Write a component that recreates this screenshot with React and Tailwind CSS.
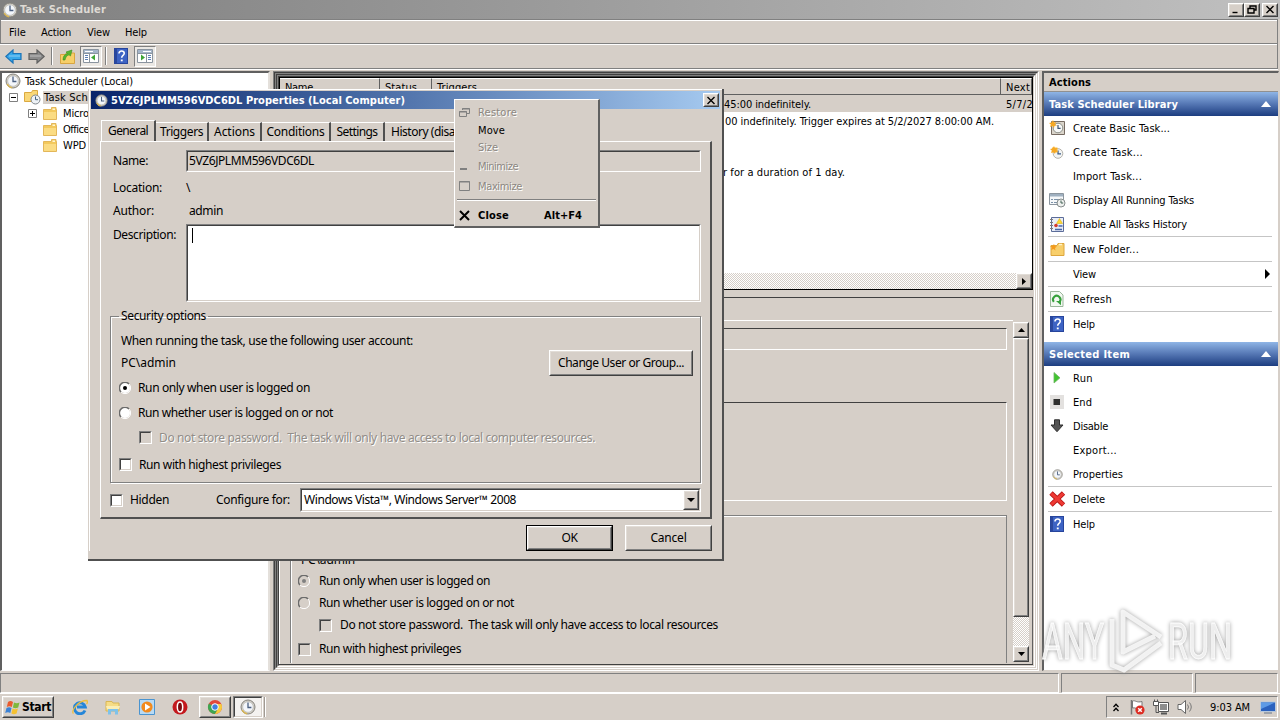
import React, { useLayoutEffect, useRef } from 'react';

// Text run that is tracked so it takes exactly `w` pixels
const Txt = ({ w, className = '', children }) => {
    const ref = useRef(null);

    useLayoutEffect(() => {
        const el = ref.current;
        el.style.letterSpacing = '0px';
        if (!w) return;
        const natural = el.getBoundingClientRect().width;
        el.style.letterSpacing = (w - natural) / el.textContent.length + 'px';
    }, [w, children]);

    return (
        <span ref={ref} className={`inline-block shrink-0 whitespace-pre ${className}`}>
            {children}
        </span>
    );
};

const ClockIcon = ({ size = 16, className = '' }) => (
    <svg width={size} height={size} viewBox="0 0 16 16" className={`shrink-0 ${className}`}>
        <circle cx="8" cy="8" r="7" fill="#d3d0c9" stroke="#85837d" />
        <circle cx="8" cy="8" r="5.3" fill="#f3f6fb" stroke="#b9b7b0" strokeWidth="0.7" />
        <path d="M8 3.500V8.500h3.400" fill="none" stroke="#4a5f80" strokeWidth="1.300" />
        <path d="M2.200 11a7 7 0 0 0 5 3.800" fill="none" stroke="#d9b552" strokeWidth="1.400" />
    </svg>
);

const FolderIcon = () => (
    <svg width="14" height="13" viewBox="0 0 14 13" className="shrink-0">
        <path d="M.5 2.500h8v-2h4.500v2h.5v10h-13z" fill="#f3c95d" stroke="#e3b75a" />
        <path d="M1 5h12v7H1z" fill="#fbdc83" />
        <path d="M9.500 1.500h2.500v1.500H9.500z" fill="#fff6d2" />
    </svg>
);

const LibraryIcon = () => (
    <svg width="17" height="16" viewBox="0 0 17 16" className="shrink-0">
        <path d="M.5 3.500h7l1-2h5v11H.5z" fill="#f9d777" stroke="#dba940" />
        <circle cx="11.500" cy="10.500" r="4.500" fill="#eef2f6" stroke="#7f868c" />
        <path d="M11.500 7.500v3.200h2.500" fill="none" stroke="#41607f" />
    </svg>
);

const HelpIcon = () => (
    <svg width="14" height="16" viewBox="0 0 14 16" className="shrink-0">
        <rect x="0.500" y="0.500" width="13" height="15" fill="#3d63c4" stroke="#27459c" />
        <path d="M1 1h2v14H1z" fill="#2a479d" />
        <path d="M5 5.500c0-3.500 5.500-3.200 5.200 0-.2 2-2.500 1.900-2.500 4.200" fill="none" stroke="#fff" strokeWidth="1.600" />
        <path d="M6.800 11.500h1.900v1.800H6.800z" fill="#fff" />
    </svg>
);

const ArrowIcon = ({ flip, fill, stroke }) => (
    <svg width="17" height="15" viewBox="0 0 17 15" className={`shrink-0 ${flip ? '-scale-x-100' : ''}`}>
        <path d="M.8 7.500 8 1v3.500h8v6H8V14z" fill={fill} stroke={stroke} strokeWidth="1.200" />
        <path d="M4 7h11" stroke="#fff" strokeOpacity="0.450" />
    </svg>
);

const PaneIcon = ({ flip }) => (
    <svg width="16" height="14" viewBox="0 0 16 14" className={flip ? '-scale-x-100' : ''}>
        <path d="M.5.5h15v13H.5z" fill="#fff" stroke="#8a949f" />
        <path d="M1 1h14v3H1z" fill="#a5b5c9" />
        <path d="M2 2.500h8" stroke="#fff" />
        <path d="M2 6.500h3M2 8.500h3M2 10.500h3" stroke="#5c7fb5" />
        <path d="M6.500 4v9M1 4.500h14" stroke="#8a949f" />
        <path d="M12 5.500v6L8 8.500z" fill="#3fa535" />
    </svg>
);

const UpFolderIcon = () => (
    <svg width="15" height="15" viewBox="0 0 15 15">
        <path d="M.5 5.500h5l1-1.500h8v10.500H.5z" fill="#f7cf69" stroke="#d8a540" />
        <path d="M3 11C3 7 5 5 7.500 4.500L6 3l6-2-1.500 6L9 5.800C7 6.500 5.500 8 5 11z" fill="#55b52f" stroke="#3a8f20" strokeWidth="0.600" />
    </svg>
);

const Spark = () => <path d="m4 0 1 2.500L7.500 2 6 4l2 1.500-2.500.3L5 8 3.500 6 1 7l.8-2.500L0 3l2.600-.5z" fill="#f6a823" />;

const BasicTaskIcon = () => (
    <svg width="17" height="16" viewBox="0 0 17 16">
        <path d="M2.500 1.500h13v13h-13z" fill="#d9d4ca" stroke="#766b62" />
        <circle cx="9" cy="8" r="4.800" fill="#f7f8f7" stroke="#8d9089" />
        <path d="M9 5v3.300h2.600" fill="none" stroke="#3d5575" strokeWidth="1.200" />
        <Spark />
    </svg>
);

const NewTaskIcon = () => (
    <svg width="14" height="13" viewBox="0 0 14 13">
        <circle cx="8" cy="7.500" r="4.800" fill="#f2f4f4" stroke="#b3b1aa" />
        <path d="M8 4.500v3.300h3" fill="none" stroke="#3b5b85" strokeWidth="1.300" />
        <path d="M2 1.500h5.500v5H2z" fill="#f8bb3c" />
        <Spark />
    </svg>
);

const RunningIcon = () => (
    <svg width="17" height="15" viewBox="0 0 17 15">
        <path d="M.5.500h14v11H.5z" fill="#f6f8fa" stroke="#8c969f" />
        <path d="M1 1h13v2.500H1z" fill="#9fb0c0" />
        <path d="M2 6.500h2M5 6.500h6M2 9.500h2M5 9.500h4" stroke="#7c92a8" />
        <circle cx="12" cy="10" r="4" fill="#eef0ee" stroke="#858c8c" />
        <path d="M12 7.500V10h2.200" fill="none" stroke="#3f5f52" />
    </svg>
);

const HistoryIcon = () => (
    <svg width="14" height="15" viewBox="0 0 14 15">
        <path d="M1.500.500h12v14h-12z" fill="#e9edf6" stroke="#5b6c99" />
        <path d="M0 2.500h3M0 5.500h3M0 8.500h3M0 11.500h3" stroke="#7a7a7a" />
        <path d="m9.500 1.500 3 5h-6z" fill="#ffd92e" stroke="#d6ab00" strokeWidth="0.500" />
        <circle cx="6" cy="8.500" r="1.800" fill="#d43a30" />
        <path d="M8.500 9h4M5 12.500h7" stroke="#4766aa" strokeWidth="1.300" />
    </svg>
);

const NewFolderIcon = () => (
    <svg width="15" height="14" viewBox="0 0 15 14">
        <path d="M1 3.500h6l1-2h6v12H1z" fill="#f8cf6b" stroke="#dda63e" />
        <path d="M9 2.500h3" stroke="#fff3c9" strokeWidth="1.500" />
        <path d="m4 2 .8 2L7 4.500 5 6l.5 2.500L3.500 7 1 8l1-2.500L0 4l2.800-.2z" fill="#f49a1c" />
    </svg>
);

const RefreshIcon = () => (
    <svg width="14" height="16" viewBox="0 0 14 16">
        <path d="M.5.500h9l3.500 3.500v11.500H.5z" fill="#f2f8f1" stroke="#9bb69b" />
        <path d="M3.800 10.800a3.700 3.700 0 1 1 5.700.2" fill="none" stroke="#35a03a" strokeWidth="2" />
        <path d="M6 10h5v4.200z" fill="#35a03a" />
    </svg>
);

const RunIcon = () => (
    <svg width="14" height="14" viewBox="0 0 14 14">
        <path d="M4 1.500v10.500L10 6.800z" fill="#41c52f" stroke="#6fb566" strokeWidth="0.800" />
    </svg>
);

const EndIcon = () => (
    <svg width="14" height="14" viewBox="0 0 14 14">
        <path d="M0 0h14v14H0z" fill="#e3e1df" />
        <path d="M3.500 4h6.500v6H3.500z" fill="#30302f" />
    </svg>
);

const DisableIcon = () => (
    <svg width="14" height="14" viewBox="0 0 14 14">
        <path d="M4.500.8h5V6H13l-6 6.700L1 6h3.500z" fill="#555" stroke="#2f2f2f" />
    </svg>
);

const DeleteIcon = () => (
    <svg width="17" height="16" viewBox="0 0 17 16">
        <path d="m2 2 12.500 12M14.500 2 2 14" stroke="#b51313" strokeWidth="4.800" />
        <path d="m2.300 2.300 12 11.400M14.200 2.300 2.300 13.700" stroke="#ee3a34" strokeWidth="3.200" />
    </svg>
);

const ACTIONS = [
    { text: 'Create Basic Task...', w: 97, icon: <BasicTaskIcon /> },
    { text: 'Create Task...', w: 70, icon: <NewTaskIcon /> },
    { text: 'Import Task...', w: 69 },
    { text: 'Display All Running Tasks', w: 121, icon: <RunningIcon /> },
    { text: 'Enable All Tasks History', w: 114, icon: <HistoryIcon /> },
    { text: 'New Folder...', w: 66, icon: <NewFolderIcon />, line: true },
    { text: 'View', w: 23, line: true, arrow: true },
    { text: 'Refresh', w: 39, icon: <RefreshIcon />, line: true },
    { text: 'Help', w: 22, icon: <HelpIcon />, line: true },
];

const ITEM_ACTIONS = [
    { text: 'Run', w: 20, icon: <RunIcon /> },
    { text: 'End', w: 19, icon: <EndIcon /> },
    { text: 'Disable', w: 35, icon: <DisableIcon /> },
    { text: 'Export...', w: 44 },
    { text: 'Properties', w: 50, icon: <ClockIcon size={11} /> },
    { text: 'Delete', w: 32, icon: <DeleteIcon />, line: true },
    { text: 'Help', w: 22, icon: <HelpIcon />, line: true },
];

const ActionGroup = ({ title, w, items }) => (
    <div className="flex flex-col">
        <div className="flex h-6 items-center justify-between bg-gradient-to-b from-[#8fb5e6] via-[#5577b4] to-[#1d3d80] pl-[5px] pr-[7px] font-bold text-white">
            <Txt w={w}>{title}</Txt>
            <svg width="10" height="6" viewBox="0 0 10 6">
                <path d="M5 0l5 6H0z" fill="#fff" />
            </svg>
        </div>
        {items.map((item, i) => (
            <div key={i} className="pl-1 pr-1.5">
                {item.line && <div className="h-px bg-[#c5c5c5]" />}
                <div className="flex h-6 items-center">
                    <div className="flex w-[18px] justify-center">{item.icon}</div>
                    <Txt w={item.w} className="ml-[7px]">{item.text}</Txt>
                    {item.arrow && (
                        <svg width="5" height="10" viewBox="0 0 5 10" className="ml-auto mr-[2px]">
                            <path d="M0 0l5 5-5 5z" />
                        </svg>
                    )}
                </div>
            </div>
        ))}
    </div>
);

const Sunken = ({ className = '', children }) => (
    <div className={`flex min-w-0 border border-b-white border-l-[#808080] border-r-white border-t-[#808080] ${className}`}>
        <div className="flex min-w-0 flex-1 border border-b-[#d6cfc8] border-l-[#404040] border-r-[#d6cfc8] border-t-[#404040]">
            {children}
        </div>
    </div>
);

const Raised = ({ className = '', children }) => (
    <div className={`flex shrink-0 border border-b-[#404040] border-l-white border-r-[#404040] border-t-white bg-[#d6cfc8] ${className}`}>
        <div className="flex flex-1 items-center justify-center border border-b-[#808080] border-l-[#e2ddd7] border-r-[#808080] border-t-[#e2ddd7]">
            {children}
        </div>
    </div>
);

const Check = ({ disabled }) => (
    <Sunken className={`h-[13px] w-[13px] shrink-0 ${disabled ? 'bg-[#d6cfc8]' : 'bg-white'}`} />
);

const Radio = ({ checked, disabled }) => (
    <svg width="12" height="12" viewBox="0 0 12 12" className="shrink-0">
        <circle cx="6" cy="6" r="5" fill={disabled ? '#d6cfc8' : '#fff'} />
        <path d="M10 2A5.500 5.500 0 0 0 2 10" fill="none" stroke="#6b6b6b" strokeWidth="1.500" />
        <path d="M10 2A5.500 5.500 0 0 1 2 10" fill="none" stroke="#fff" />
        {checked && <circle cx="6" cy="6" r="2" fill={disabled ? '#808080' : '#000'} />}
    </svg>
);

const TreeBox = ({ plus }) => (
    <svg width="9" height="9" viewBox="0 0 9 9" className="shrink-0">
        <path d="M.5.500h8v8h-8z" fill="#fff" stroke="#808080" />
        <path d={plus ? 'M2 4.500h5M4.500 2v5' : 'M2 4.500h5'} stroke="#000" />
    </svg>
);

const TitleButton = ({ d, className = '' }) => (
    <Raised className={`h-[14px] w-[16px] ${className}`}>
        <svg width="10" height="9" viewBox="0 0 10 9">
            <path d={d} fill="none" stroke="#000" strokeWidth="1.400" />
        </svg>
    </Raised>
);

const Dither = ({ className }) => (
    <div className={`bg-[#e9e6e1] bg-[repeating-conic-gradient(#d6cfc8_0_25%,#fff_0_50%)] bg-[length:2px_2px] ${className}`} />
);

const Toolbar = () => (
    <div className="flex h-[25px] items-center border-b border-b-[#808080] pl-[5px]">
        <ArrowIcon fill="#38a8ea" stroke="#1c74b8" />
        <div className="w-[6px]" />
        <ArrowIcon flip fill="#8b8b8b" stroke="#616161" />
        <div className="ml-[6px] mr-[7px] h-[18px] w-[2px] border-l border-[#808080] bg-white" />
        <UpFolderIcon />
        <div className="ml-[5px] flex h-[21px] w-[22px] items-center justify-center border border-b-white border-l-[#808080] border-r-white border-t-[#808080] bg-[#ebe8e4]">
            <PaneIcon />
        </div>
        <div className="ml-[3px] mr-[7px] h-[18px] w-[2px] border-l border-[#808080] bg-white" />
        <HelpIcon />
        <div className="ml-[6px] flex h-[21px] w-[22px] items-center justify-center border border-b-white border-l-[#808080] border-r-white border-t-[#808080] bg-[#ebe8e4]">
            <PaneIcon flip />
        </div>
    </div>
);

const Tree = () => (
    <div className="flex w-[270px] flex-col overflow-hidden border-b border-l-2 border-r-2 border-t-2 border-b-white border-l-[#606060] border-r-[#e4e0db] border-t-[#606060] bg-white">
        <div className="flex h-4 items-center pl-[3px]">
            <ClockIcon />
            <Txt w={108} className="ml-[4px]">Task Scheduler (Local)</Txt>
        </div>
        <div className="flex h-4 items-center pl-[7px]">
            <TreeBox />
            <div className="w-[6px]" />
            <LibraryIcon />
            <div className="ml-[2px] bg-[#d6cfc8] px-[1px] py-px">
                <Txt w={44}>Task Sch</Txt>
            </div>
        </div>
        <div className="flex h-4 items-center pl-[26px]">
            <TreeBox plus />
            <div className="w-[6px]" />
            <FolderIcon />
            <Txt w={26} className="ml-[6px]">Micro</Txt>
        </div>
        <div className="flex h-4 items-center pl-[41px]">
            <FolderIcon />
            <Txt w={26} className="ml-[6px]">Office</Txt>
        </div>
        <div className="flex h-4 items-center pl-[41px]">
            <FolderIcon />
            <Txt w={23} className="ml-[6px]">WPD</Txt>
        </div>
    </div>
);

const HeaderCell = ({ className, children }) => (
    <div className={`flex h-[17px] items-center border-b border-r border-t border-b-[#606060] border-r-[#606060] border-t-white bg-[#d6cfc8] pl-[5px] pt-px ${className}`}>
        {children}
    </div>
);

const TaskList = () => (
    <div className="flex h-[213px] flex-col overflow-hidden border border-black bg-white">
        <div className="flex">
            <HeaderCell className="w-[100px]"><Txt w={28}>Name</Txt></HeaderCell>
            <HeaderCell className="w-[52px]"><Txt w={32}>Status</Txt></HeaderCell>
            <HeaderCell className="w-[569px]"><Txt w={40}>Triggers</Txt></HeaderCell>
            <HeaderCell className="flex-1"><Txt w={24}>Next</Txt></HeaderCell>
        </div>
        <div className="flex h-[17px] items-center bg-[#d6cfc8] pl-[444px] pt-px">
            <Txt w={87}>45:00 indefinitely.</Txt>
            <Txt w={27} className="ml-[195px]">5/7/2</Txt>
        </div>
        <div className="flex h-[17px] items-center pl-[445px] pt-px">
            <Txt w={269}>00 indefinitely. Trigger expires at 5/2/2027 8:00:00 AM.</Txt>
        </div>
        <div className="h-[34px]" />
        <div className="flex h-[17px] items-center pl-[443px] pt-px">
            <Txt w={122}>r for a duration of 1 day.</Txt>
        </div>
        <div className="mt-auto flex h-[16px]">
            <Dither className="flex-1" />
            <Raised className="w-[16px]">
                <svg width="4" height="7" viewBox="0 0 4 7"><path d="M0 0l4 3.500L0 7z" /></svg>
            </Raised>
        </div>
    </div>
);

const TaskDetails = () => (
    <div className="mt-[7px] flex flex-1 overflow-hidden border-b border-t border-[#404040] bg-[#d6cfc8]">
        <div className="flex min-w-0 flex-1 flex-col border-l border-white font-['Noto_Sans','Open_Sans',sans-serif] text-xs leading-none">
            <div className="h-[23px] shrink-0 border-b border-white" />
            <div className="flex flex-1 flex-col overflow-hidden pl-[10px] pr-[6px]">
                <div className="mt-[7px] h-[22px] shrink-0 border border-b-white border-l-[#404040] border-r-white border-t-[#404040]" />
                <div className="mt-[52px] h-[99px] shrink-0 border border-b-white border-l-[#404040] border-r-white border-t-[#404040]" />
                <div className="mt-[14px] flex h-[148px] shrink-0 flex-col border-l border-r border-t border-[#808080] pl-[7px] pt-[34px] shadow-[inset_1px_1px_0_#fff]">
                    <div className="flex h-[20px] shrink-0 items-center pl-[3px]"><Txt w={54}>PC\admin</Txt></div>
                    <div className="flex h-[22px] shrink-0 items-center">
                        <Radio checked disabled />
                        <Txt w={171} className="ml-[9px]">Run only when user is logged on</Txt>
                    </div>
                    <div className="flex h-[22px] shrink-0 items-center">
                        <Radio disabled />
                        <Txt w={195} className="ml-[9px]">Run whether user is logged on or not</Txt>
                    </div>
                    <div className="flex h-[22px] shrink-0 items-center pl-[21px]">
                        <Check disabled />
                        <Txt w={378} className="ml-[8px]">Do not store password.  The task will only have access to local resources</Txt>
                    </div>
                    <div className="flex h-[26px] shrink-0 items-center">
                        <Check disabled />
                        <Txt w={142} className="ml-[8px]">Run with highest privileges</Txt>
                    </div>
                </div>
            </div>
        </div>
        <div className="mb-[2px] mr-[3px] mt-[24px] flex w-[16px] flex-col">
            <Raised className="h-[16px]">
                <svg width="7" height="4" viewBox="0 0 7 4"><path d="M0 4l3.500-4L7 4z" /></svg>
            </Raised>
            <Raised className="h-[279px]" />
            <Dither className="flex-1" />
            <Raised className="h-[16px]">
                <svg width="7" height="4" viewBox="0 0 7 4"><path d="M0 0h7L3.500 4z" /></svg>
            </Raised>
        </div>
        <div className="w-px bg-[#606060]" />
    </div>
);

const Tab = ({ w, className, children }) => (
    <div className={`flex h-[19px] items-center justify-center border-r-2 border-t border-r-[#505050] border-t-white ${className}`}>
        <Txt w={w}>{children}</Txt>
    </div>
);

const PropertiesDialog = () => (
    <div className="absolute left-[88px] top-[89px] flex h-[472px] w-[636px] flex-col border-b-2 border-r-2 border-b-[#505050] border-r-[#505050] bg-[#d6cfc8] pb-[8px] pl-[1px] font-['Noto_Sans','Open_Sans',sans-serif] text-xs leading-none">
        <div className="flex flex-1 flex-col border-l border-t border-white">
            <div className="ml-px mr-[2px] mt-px flex h-[18px] items-center bg-gradient-to-r from-[#0a246a] to-[#a6caf0] pl-[4px] pr-[1px] font-['DejaVu_Sans_Condensed','DejaVu_Sans',sans-serif] text-[11px] font-bold text-white">
                <ClockIcon size={13} className="mt-px" />
                <Txt w={294} className="ml-[3px]">5VZ6JPLMM596VDC6DL Properties (Local Computer)</Txt>
                <TitleButton className="ml-auto" d="M1.500 1l7 7M8.500 1l-7 7" />
            </div>
            <div className="mt-[11px] flex h-[21px] items-end pl-[11px]">
                <Tab w={40} className="h-[21px] w-[55px] border-l border-l-white">General</Tab>
                <Tab w={43} className="w-[53px]">Triggers</Tab>
                <Tab w={41} className="w-[53px]">Actions</Tab>
                <Tab w={58} className="w-[69px]">Conditions</Tab>
                <Tab w={41} className="w-[54px]">Settings</Tab>
                <div className="flex h-[19px] w-[70px] items-center border-t border-white pl-[6px]">
                    <Txt w={64}>History (disa</Txt>
                </div>
            </div>
            <div className="ml-[10px] mr-[10px] flex h-[378px] flex-col border-b-2 border-l border-r-2 border-t border-b-[#505050] border-l-white border-r-[#505050] border-t-white pl-[9px] pr-[9px]">
                <div className="mt-[8px] flex h-[22px] items-center pl-[3px]">
                    <Txt w={35}>Name:</Txt>
                    <Sunken className="ml-[38px] h-[22px] flex-1 items-stretch">
                        <div className="flex items-center"><Txt w={125} className="ml-px">5VZ6JPLMM596VDC6DL</Txt></div>
                    </Sunken>
                </div>
                <div className="mt-[4px] flex h-[24px] items-center pl-[3px]">
                    <Txt w={49}>Location:</Txt>
                    <Txt w={5} className="ml-[24px]">\</Txt>
                </div>
                <div className="flex h-[22px] items-center pl-[3px]">
                    <Txt w={41}>Author:</Txt>
                    <Txt w={34} className="ml-[35px]">admin</Txt>
                </div>
                <div className="mt-[2px] flex h-[78px] pl-[3px]">
                    <Txt w={63} className="mt-[5px]">Description:</Txt>
                    <Sunken className="ml-[10px] flex-1 bg-white">
                        <div className="ml-[4px] mt-[2px] h-[15px] w-px bg-black" />
                    </Sunken>
                </div>
                <fieldset className="mt-[8px] flex h-[173px] flex-col border border-[#808080] pl-[8px] pr-[7px] shadow-[1px_1px_0_#fff,inset_1px_1px_0_#fff]">
                    <legend className="px-[2px] leading-[12px]"><Txt w={85}>Security options</Txt></legend>
                    <div className="mt-[9px] flex h-[20px] items-center pl-[2px]">
                        <Txt w={292}>When running the task, use the following user account:</Txt>
                    </div>
                    <div className="flex h-[24px] items-center justify-between pl-[2px]">
                        <Txt w={55}>PC\admin</Txt>
                        <Raised className="h-[26px] w-[144px]"><Txt w={126}>Change User or Group...</Txt></Raised>
                    </div>
                    <div className="flex h-[25px] items-center">
                        <Radio checked />
                        <Txt w={172} className="ml-[7px]">Run only when user is logged on</Txt>
                    </div>
                    <div className="flex h-[25px] items-center">
                        <Radio />
                        <Txt w={195} className="ml-[7px]">Run whether user is logged on or not</Txt>
                    </div>
                    <div className="flex h-[25px] items-center pl-[20px] text-[#918d88] [text-shadow:1px_1px_0_#fff]">
                        <Check disabled />
                        <Txt w={436} className="ml-[7px]">Do not store password.  The task will only have access to local computer resources.</Txt>
                    </div>
                    <div className="flex h-[28px] items-center">
                        <Check />
                        <Txt w={142} className="ml-[7px] mt-px">Run with highest privileges</Txt>
                    </div>
                </fieldset>
                <div className="mt-[5px] flex h-[24px] items-center">
                    <Check />
                    <Txt w={39} className="ml-[7px]">Hidden</Txt>
                    <Txt w={74} className="ml-[47px]">Configure for:</Txt>
                    <Sunken className="ml-[10px] h-[24px] flex-1 bg-white">
                        <div className="flex flex-1 items-center justify-between pl-[2px]">
                            <Txt w={212}>Windows Vista™, Windows Server™ 2008</Txt>
                            <Raised className="h-[20px] w-[16px]">
                                <svg width="8" height="4" viewBox="0 0 8 4"><path d="M0 0h8L4 4z" /></svg>
                            </Raised>
                        </div>
                    </Sunken>
                </div>
            </div>
            <div className="mt-[6px] flex justify-end gap-[12px] pr-[10px]">
                <div className="border border-black"><Raised className="h-[24px] w-[85px]"><Txt w={16}>OK</Txt></Raised></div>
                <Raised className="h-[26px] w-[87px]"><Txt w={36}>Cancel</Txt></Raised>
            </div>
        </div>
    </div>
);

const MenuItem = ({ w, icon, shortcut, disabled, className, children }) => (
    <div className={`flex items-center pl-[4px] ${disabled ? 'text-[#8c8781] [text-shadow:1px_1px_0_#fff]' : 'text-black'} ${className}`}>
        <svg width="11" height="11" viewBox="0 0 11 11" className="mr-[8px] shrink-0">
            {icon && <path d={icon} fill="none" stroke={disabled ? '#808080' : '#000'} strokeWidth={disabled ? 1 : 2} />}
        </svg>
        <Txt w={w}>{children}</Txt>
        {shortcut && <Txt w={38} className="ml-auto mr-[16px]">{shortcut}</Txt>}
    </div>
);

const SystemMenu = () => (
    <div className="absolute left-[454px] top-[99px] flex h-[129px] w-[146px] flex-col border-b-2 border-l border-r-2 border-t border-b-[#606060] border-l-white border-r-[#606060] border-t-white bg-[#d6cfc8] pt-[3px]">
        <MenuItem disabled w={39} className="h-[19px]" icon="M3.500 3V1.500h7v5H8M3 2h8M.5 4.500h7v5h-7zM0 5h8">Restore</MenuItem>
        <MenuItem w={27} className="h-[17px]">Move</MenuItem>
        <MenuItem disabled w={20} className="h-[17px]">Size</MenuItem>
        <MenuItem disabled w={40} className="h-[20px]" icon="M1 8.500h7M1 7.500h7">Minimize</MenuItem>
        <MenuItem disabled w={44} className="h-[20px]" icon="M.5.500h10v9H.5zM0 1h11">Maximize</MenuItem>
        <div className="mx-[2px] mb-[4px] mt-[3px] h-[2px] border-t border-[#808080] bg-white" />
        <MenuItem w={31} className="h-[20px] font-bold" icon="M1 1l9 9M10 1l-9 9" shortcut="Alt+F4">Close</MenuItem>
    </div>
);

const Taskbar = () => (
    <div className="flex h-[27px] items-center border-t border-white pl-[2px]">
        <Raised className="h-[22px] w-[52px]">
            <svg width="16" height="15" viewBox="0 0 16 15" className="mr-[1px]">
                <path d="M3 2c2-1.500 3.500-1 5 0L6.800 7C5 6 3.500 6 1.800 7z" fill="#ea5b2e" />
                <path d="M9 2.500c2 1 3.500 1 5.500 0L13.200 7.500c-2 1-3.500 1-5.300 0z" fill="#7fb83a" />
                <path d="M1.500 8c2-1.200 3.500-1 5 0l-1.200 5C3.800 12 2 12 .2 13z" fill="#3b82d6" />
                <path d="M7.600 8.500c1.800 1 3.300 1 5.300 0l-1.300 5c-2 1-3.500 1-5.200 0z" fill="#f5c131" />
            </svg>
            <Txt w={29} className="text-xs font-bold leading-none">Start</Txt>
        </Raised>
        <svg width="16" height="16" viewBox="0 0 16 16" className="ml-[18px]">
            <path d="M13 11.500A5.500 5.500 0 1 1 13.300 8H5" fill="none" stroke="#2586d8" strokeWidth="2.900" />
            <path d="M1.500 14.500C-1.500 12 6 1.500 15 1.500c1 2-.5 3.500-.5 3.500" fill="none" stroke="#eebf3e" strokeWidth="1.300" />
        </svg>
        <svg width="16" height="16" viewBox="0 0 16 16" className="ml-[17px]">
            <path d="M1 2.500h6l1 1.500h6v8H1z" fill="#f6dc85" stroke="#d9b655" />
            <path d="M1 7h14l-1 3H2z" fill="#fbeeb5" />
            <path d="M3 15.500v-5.500h10v5.500h-3v-3H6v3z" fill="#7ec2ea" />
        </svg>
        <svg width="16" height="16" viewBox="0 0 16 16" className="ml-[18px]">
            <path d="M.5.500h15v15H.5z" fill="#b8daf4" stroke="#4a94d0" />
            <circle cx="8" cy="8" r="5.600" fill="#f28a1d" />
            <path d="M6 4.500v7L11.500 8z" fill="#fff" />
        </svg>
        <svg width="16" height="16" viewBox="0 0 16 16" className="ml-[17px]">
            <circle cx="8" cy="8" r="7.500" fill="#c3181d" />
            <ellipse cx="8" cy="8" rx="2.700" ry="5" fill="#7b0b10" stroke="#fff" strokeWidth="1.500" />
        </svg>
        <Raised className="ml-[11px] h-[22px] w-[32px]">
            <svg width="16" height="16" viewBox="0 0 16 16">
                <circle cx="8" cy="8" r="7" fill="#e1483a" />
                <path d="M8 8 1.900 4.500A7 7 0 0 0 8 15l3-5z" fill="#3ea652" />
                <path d="M8 15a7 7 0 0 0 6.300-10H8l3 5z" fill="#f7cd3d" />
                <circle cx="8" cy="8" r="3.300" fill="#3f7fe0" stroke="#fff" />
            </svg>
        </Raised>
        <Sunken className="ml-[2px] h-[22px] w-[30px] bg-[#f4f2f0]">
            <div className="flex flex-1 items-center justify-center"><ClockIcon /></div>
        </Sunken>
        <div className="ml-[1px] h-[20px] w-[2px] border-l border-[#a09a94] bg-white" />

        <div className="ml-auto mr-[2px] flex h-[22px] w-[172px] items-center border border-b-white border-l-[#808080] border-r-white border-t-[#808080] pl-[6px]">
            <svg width="6" height="9" viewBox="0 0 6 9">
                <path d="M.5 4 3 1.300 5.500 4M.5 8 3 5.300 5.500 8" fill="none" stroke="#000" strokeWidth="1.300" />
            </svg>
            <svg width="16" height="16" viewBox="0 0 16 16" className="ml-[10px]">
                <path d="M2.500 1v14.500" stroke="#777" strokeWidth="1.500" />
                <path d="M3.500 2c3-1 4 2 9.500.5v7C8 11 6.500 8 3.500 9z" fill="#fff" stroke="#777" />
                <circle cx="11" cy="11" r="4.600" fill="#dd2c22" />
                <path d="m9.200 9.200 3.600 3.600m0-3.600-3.600 3.600" stroke="#fff" strokeWidth="1.500" />
            </svg>
            <svg width="16" height="16" viewBox="0 0 16 16" className="ml-[8px]">
                <path d="M5.500 3.500h10v9h-10z" fill="#fff" stroke="#555" />
                <path d="M7 5h7v6H7z" fill="#8d8d8d" />
                <path d="M8 14.500h6" stroke="#555" strokeWidth="2" />
                <path d="M1.500.500v2M4.500.500v2" stroke="#555" />
                <path d="M.5 2.500h5v4h-5z" fill="#fff" stroke="#555" />
                <path d="M3 6.500v7h3" fill="none" stroke="#555" />
            </svg>
            <svg width="17" height="16" viewBox="0 0 17 16" className="ml-[8px]">
                <path d="M1 5.500h3L8.500 1.500v13L4 10.500H1z" fill="#fff" stroke="#666" />
                <path d="M10.500 5.500q2 2.500 0 5M12.500 3.500q3.500 4.500 0 9" fill="none" stroke="#777" />
            </svg>
            <Txt w={40} className="ml-[16px]">9:03 AM</Txt>
            <svg width="16" height="13" viewBox="0 0 16 13" className="ml-[10px]">
                <path d="M.5 1h15v9.500H.5z" fill="#2b62be" stroke="#b7c8dc" />
                <path d="M1 1.500h14L1 8z" fill="#5e9be6" />
                <path d="M4 12h8" stroke="#8a93a0" strokeWidth="1.500" />
            </svg>
        </div>
    </div>
);

const Watermark = () => (
    <svg width="240" height="72" viewBox="0 0 240 72" className="absolute left-[1038px] top-[606px] overflow-visible [filter:drop-shadow(0_0_2px_#959595)]">
        <g className="font-['Roboto','Liberation_Sans',sans-serif]" fontSize="50" fill="#f4f4f4" fillOpacity="0.900" stroke="#fff" strokeWidth="0.800">
            <text x="4" y="53" textLength="62" lengthAdjust="spacingAndGlyphs">ANY</text>
            <text x="130" y="53" textLength="64" lengthAdjust="spacingAndGlyphs">RUN</text>
        </g>
        <g fill="none" stroke="#f8f8f8" strokeOpacity="0.900" strokeWidth="5" strokeLinejoin="round">
            <path d="M85 38V6l38 25M85 28v18l32-16" />
            <path d="M74 13v46l12 5 37-27" />
        </g>
    </svg>
);

const StatusCell = ({ className }) => (
    <div className={`border border-b-white border-l-[#808080] border-r-white border-t-[#808080] ${className}`} />
);

const App = () => (
    <div className="relative flex h-[720px] w-[1280px] flex-col overflow-hidden bg-[#d6cfc8] font-['DejaVu_Sans_Condensed','DejaVu_Sans',sans-serif] text-[11px] leading-none text-black">
        <div className="flex h-[19px] items-center bg-gradient-to-r from-[#808080] to-[#c0c0c0] pl-[2px] pr-[2px] font-bold text-[#dedad4]">
            <ClockIcon />
            <Txt w={86} className="ml-[2px]">Task Scheduler</Txt>
            <TitleButton className="ml-auto" d="M1.500 7.500h5" />
            <TitleButton d="M3 3V1h6v4H7M1 3.500h6v4.500H1z" />
            <TitleButton className="ml-[2px]" d="M1.500 1l7 7M8.500 1l-7 7" />
        </div>
        <div className="mr-[2px] flex h-[25px] items-center border-b border-l border-r border-t border-[#808080] pl-[8px] pt-px shadow-[inset_0_1px_0_#fff,0_1px_0_#fff]">
            <Txt w={17}>File</Txt>
            <Txt w={30} className="ml-[15px]">Action</Txt>
            <Txt w={23} className="ml-[16px]">View</Txt>
            <Txt w={22} className="ml-[15px]">Help</Txt>
        </div>
        <div className="mr-[2px] border-r border-[#808080] shadow-[0_1px_0_#fff]">
            <Toolbar />
        </div>

        <div className="mt-[2px] flex h-[600px]">
            <Tree />
            <Sunken className="ml-[3px] w-[766px] shrink-0">
                <Sunken className="flex-1">
                    <Sunken className="flex-1">
                        <div className="flex min-w-0 flex-1 flex-col">
                            <TaskList />
                            <TaskDetails />
                        </div>
                    </Sunken>
                </Sunken>
            </Sunken>
            <div className="ml-[3px] flex w-[237px] flex-col border-b border-l-2 border-r border-t-2 border-b-[#d6cfc8] border-l-[#606060] border-r-[#d6cfc8] border-t-[#606060] bg-white">
                <div className="flex h-[19px] items-center border-b border-[#909090] bg-[#d6cfc8] pl-[5px] font-bold">
                    <Txt w={42}>Actions</Txt>
                </div>
                <ActionGroup title="Task Scheduler Library" w={129} items={ACTIONS} />
                <div className="h-[6px]" />
                <ActionGroup title="Selected Item" w={81} items={ITEM_ACTIONS} />
            </div>
        </div>

        <div className="mt-[2px] flex h-[20px] gap-[2px] pr-[2px]">
            <StatusCell className="flex-1" />
            <StatusCell className="w-[132px]" />
            <StatusCell className="w-[83px]" />
        </div>
        <Taskbar />

        <PropertiesDialog />
        <SystemMenu />
        <Watermark />
    </div>
);

export default App;
